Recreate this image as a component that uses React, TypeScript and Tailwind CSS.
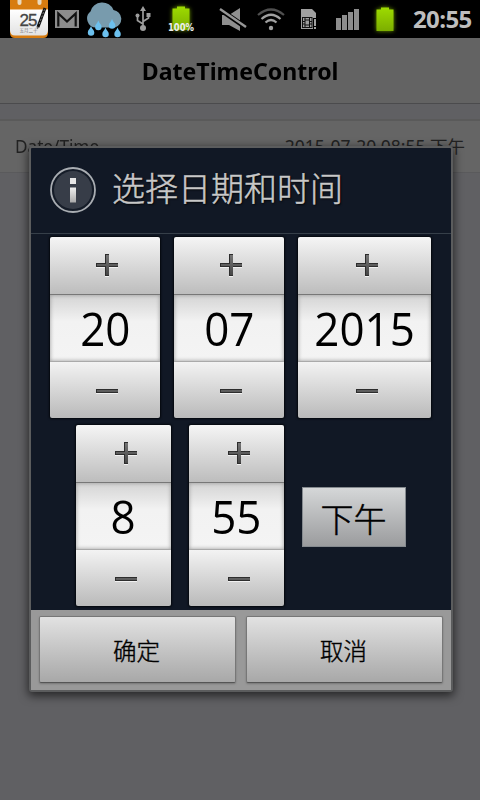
import React from "react";

const cjk = "font-['Noto_Sans','Noto_Sans_CJK_SC',sans-serif]";

function CalendarIcon() {
  return (
    <svg width="38" height="38" viewBox="0 0 38 38">
      <defs>
        <linearGradient id="page" x1="0" y1="0" x2="0" y2="1">
          <stop offset="0" stopColor="#fff" />
          <stop offset="1" stopColor="#e2e2e2" />
        </linearGradient>
      </defs>
      <path d="M0 0H38V33Q38 38 33 38H5Q0 38 0 33Z" fill="#d77c10" />
      <path d="M0 9.500H38V30Q38 35.500 33 35.500H5Q0 35.500 0 30Z" fill="url(#page)" />
      <rect x="7.500" y="-2" width="4" height="7" rx="2" fill="#ead9bd" />
      <rect x="27.500" y="-2" width="4" height="7" rx="2" fill="#ead9bd" />
      <text x="9.500" y="26" fontSize="17" fill="#444" stroke="#444" strokeWidth=".3" fontFamily="Liberation Sans" textLength="18">25</text>
      <text x="9.500" y="31.500" fontSize="4.500" fill="#777" fontFamily="Noto Sans CJK SC" textLength="18">五月二十</text>
      <path d="M28 27L35 8" stroke="#111" strokeWidth="3" />
      <path d="M29.200 24L34.500 9.500" stroke="#999" strokeWidth=".8" strokeDasharray="2 1.500" />
      <path d="M26.800 29.500L26.600 26.500L29.400 27.500Z" fill="#666" />
    </svg>
  );
}

function MailIcon() {
  return (
    <svg width="24" height="18" viewBox="0 0 24 18">
      <rect width="24" height="18" fill="#8c8c8c" />
      <path d="M3.300 16.500V3.500L12 11.500L20.700 3.500V16.500" fill="none" stroke="#111" strokeWidth="2.200" />
    </svg>
  );
}

function RainIcon() {
  const drops: number[][] = [[5, 26], [12.3, 20.5], [19.5, 27.5], [26, 19], [31.5, 27.5]];
  return (
    <svg width="38" height="38" viewBox="0 0 38 38">
      <path d="M10 27.500A9 9 0 0 1 4.500 11.500A12 11.500 0 0 1 27.500 10A9 9 0 0 1 29 27.500Z" fill="#789bad" />
      {drops.map(([x, y]) => (
        <path key={x} transform={`translate(${x} ${y})`} d="M0 0C1 3 3.300 4 3.300 6.500A3.200 3.200 0 0 1 -3.200 6.500C-3.200 4 -1 3 0 0Z" fill="#6cc0ee" />
      ))}
    </svg>
  );
}

function UsbIcon() {
  return (
    <svg width="16" height="26" viewBox="0 0 16 26" fill="none" stroke="#9d9d9d" strokeWidth="1.700">
      <path d="M8 4V21M8 18L2.500 14.500V10M8 15.500L13.500 12V8.500" />
      <path d="M8 0L11 5H5Z" fill="#9d9d9d" stroke="none" />
      <circle cx="8" cy="22" r="3" fill="#9d9d9d" stroke="none" />
      <circle cx="2.500" cy="9.500" r="2" fill="#9d9d9d" stroke="none" />
      <rect x="11.500" y="7" width="4" height="4" fill="#9d9d9d" stroke="none" />
    </svg>
  );
}

function Battery({ percent }: { percent?: string }) {
  return (
    <svg width="30" height="32" viewBox="0 0 30 32" className="overflow-visible">
      <defs>
        <linearGradient id="cell" x1="0" y1="0" x2="0" y2="1">
          <stop offset="0" stopColor="#9edb00" />
          <stop offset="1" stopColor="#7cae00" />
        </linearGradient>
      </defs>
      <path d="M6.500 5.500H11V3.500H19V5.500H23.500V27H6.500Z" fill="url(#cell)" className="drop-shadow-[0_0_2px_#6f9a00]" />
      {percent && (
        <text x="2" y="28" fontSize="10" fontWeight="700" fill="#eee" fontFamily="DejaVu Sans" textLength="26" lengthAdjust="spacingAndGlyphs">{percent}</text>
      )}
    </svg>
  );
}

function MuteIcon() {
  return (
    <svg width="28" height="24" viewBox="0 0 28 24">
      <path d="M3 7H10L21 0V23L10 17H3Z" fill="#8f8f8f" />
      <path d="M1 1.500L27 19.500" stroke="#000" strokeWidth="5" />
      <path d="M1 1L27 19" stroke="#969696" strokeWidth="2.400" />
    </svg>
  );
}

function WifiIcon() {
  return (
    <svg width="28" height="23" viewBox="0 0 28 23" fill="none" strokeWidth="2.200">
      <path d="M1 7Q14 -4 27 7" stroke="#505050" />
      <path d="M4.500 11Q14 2.500 23.500 11" stroke="#a0a0a0" />
      <path d="M8.500 14.500Q14 9.500 19.500 14.500" stroke="#a0a0a0" />
      <circle cx="14" cy="20" r="2.200" fill="#a0a0a0" stroke="none" />
    </svg>
  );
}

function SimIcon() {
  return (
    <svg width="16" height="21" viewBox="0 0 16 21">
      <path d="M0 0H11L15 4V9H12V20H0Z" fill="#a0a0a0" />
      <rect x="1.500" y="8.500" width="9.500" height="10" fill="#a0a0a0" stroke="#111" />
      <rect x="4" y="11" width="4.500" height="5" stroke="#111" fill="none" />
      <path d="M4 8V11M8.500 8V11M4 16V19M8.500 16V19M1 12.500H4M1 15H4M8.500 12.500H11M8.500 15H11" stroke="#111" />
      <path d="M14 10V17M14 18V20" stroke="#a0a0a0" strokeWidth="2" />
    </svg>
  );
}

function SignalIcon() {
  return (
    <svg width="24" height="22" viewBox="0 0 24 22" fill="#8d8d8d">
      <rect x="0" y="9" width="5" height="12" />
      <rect x="6" y="6" width="5" height="15" />
      <rect x="12" y="3" width="5" height="18" />
      <rect x="18" y="0" width="5" height="21" />
    </svg>
  );
}

function Sign({ plus }: { plus?: boolean }) {
  return (
    <svg width="24" height="24" viewBox="0 0 24 24" className="shrink-0">
      <defs>
        <linearGradient id="ink" gradientUnits="userSpaceOnUse" x1="0" y1="1" x2="0" y2="23">
          <stop offset="0" stopColor="#777" />
          <stop offset="1" stopColor="#444" />
        </linearGradient>
      </defs>
      <path d={plus ? "M10 2H14V11H23V15H14V24H10V15H1V11H10Z" : "M1 11H23V15H1Z"} fill="#f1f1f1" />
      <path d={plus ? "M10 1H14V10H23V14H14V23H10V14H1V10H10Z" : "M1 10H23V14H1Z"} fill="#2d2d2d" />
      <path d={plus ? "M11 2H14V11H23V13H14V22H11V13H2V11H11Z" : "M2 11H23V13H2Z"} fill="url(#ink)" />
    </svg>
  );
}

function Picker({ value, width }: { value: string; width: string }) {
  return (
    <div className={`flex h-[181px] flex-col overflow-hidden rounded-[2px] shadow-[0_0_2px_1px_#05080d] ${width}`}>
      <button className="flex h-[57px] shrink-0 items-center justify-center bg-linear-to-b from-[#f5f5f5] to-[#bdbdbd] pb-px pl-[4px]">
        <Sign plus />
      </button>
      <div className="flex h-[68px] shrink-0 items-center justify-center border-y border-t-[#777] border-b-[#aaa] bg-linear-to-b from-[#d4d4d4] via-[#f2f2f2] via-40% to-[#f4f4f4] shadow-[inset_0_0_4px_#999]">
        <span className="scale-x-[0.955] font-['Open_Sans','Noto_Sans',sans-serif] text-[46px] leading-[66px] text-black">{value}</span>
      </div>
      <button className="flex h-[56px] shrink-0 items-center justify-center bg-linear-to-b from-[#f3f3f3] to-[#bababa] pl-[4px] pt-[2px]">
        <Sign />
      </button>
    </div>
  );
}

function DialogButton({ label }: { label: string }) {
  return (
    <button className="h-[67px] w-[197px] rounded-[2px] border border-[#777] border-b-[#555] bg-linear-to-b from-[#e2e2e2] to-[#a8a8a8] pr-[2px] pt-[2px] font-['Noto_Sans_CJK_SC',sans-serif] text-[23.500px] font-light text-black shadow-[0_1px_2px_#777] [-webkit-text-stroke:0.4px_#000]">
      {label}
    </button>
  );
}

export default function App() {
  return (
    <div className={`relative h-[800px] w-[480px] overflow-hidden bg-[#606063] ${cjk}`}>
      <div className="flex h-[38px] items-start bg-black">
        <div className="ml-[10px]"><CalendarIcon /></div>
        <div className="ml-[7px] mt-[10px]"><MailIcon /></div>
        <div className="ml-[7px]"><RainIcon /></div>
        <div className="ml-[11px] mt-[6px]"><UsbIcon /></div>
        <div className="ml-[15px] mt-[3px]"><Battery percent="100%" /></div>
        <div className="ml-[23px] mt-[8px]"><MuteIcon /></div>
        <div className="ml-[10px] mt-[8px]"><WifiIcon /></div>
        <div className="ml-[16px] mt-[9px]"><SimIcon /></div>
        <div className="ml-[19px] mt-[9px]"><SignalIcon /></div>
        <div className="ml-[10px] mt-[4px]"><Battery /></div>
        <div className="ml-[13px] whitespace-nowrap font-['Open_Sans',sans-serif] text-[24px] font-bold leading-[38px] tracking-[-0.6px] text-[#bebebe]">20:55</div>
      </div>

      <header className="flex h-[66px] items-center justify-center border-b border-[#4b4b4d] bg-[#636363] font-['Noto_Sans',sans-serif] text-[24px] font-bold text-black">
        <span className="scale-x-[0.963]">DateTimeControl</span>
      </header>
      <div className="h-[15px]" />
      <div className="flex h-[54px] items-center justify-between border-t-2 border-b border-t-[#5a5a5a] border-b-[#5a5a5c] bg-[#656565] px-[15px] text-[17.500px] text-[#222]">
        <span className="origin-left scale-x-[0.98]">Date/Time</span>
        <span>2015-07-20 08:55 下午</span>
      </div>

      <div role="dialog" className="absolute left-[29px] top-[146px] flex h-[546px] w-[424px] flex-col rounded-[3px] border-2 border-[#5b5c5d] bg-[#111825] shadow-[0_3px_10px_1px_rgba(0,0,0,0.6)]">
        <div className="flex h-[86px] shrink-0 items-center border-b border-[#363f49] pl-[18px]">
          <svg width="48" height="48" viewBox="0 0 48 48" className="mb-[2px]">
            <defs>
              <linearGradient id="letter" x1="0" y1="0" x2="0" y2="1">
                <stop offset="0" stopColor="#eee" />
                <stop offset="1" stopColor="#aaa" />
              </linearGradient>
            </defs>
            <circle cx="24" cy="24" r="22" fill="#151c28" stroke="#a9adb2" strokeWidth="1.800" />
            <circle cx="24" cy="24" r="19" fill="#373d48" />
            <rect x="21" y="12" width="6" height="6" fill="#e6e6e6" />
            <rect x="21" y="21.500" width="6" height="15" fill="url(#letter)" />
          </svg>
          <h1 className="mb-[7px] ml-[15px] font-['Noto_Sans_CJK_SC',sans-serif] text-[33px] font-light leading-[48px] text-[#c8c8c8] [-webkit-text-stroke:0.5px_#c8c8c8] [text-shadow:1px_1px_2px_#000]">选择日期和时间</h1>
        </div>
        <div className="flex h-[376px] shrink-0 flex-col gap-[7px] pt-[3px]">
          <div className="flex gap-[14px] pl-[19px]">
            <Picker value="20" width="w-[110px]" />
            <Picker value="07" width="w-[110px]" />
            <Picker value="2015" width="w-[133px]" />
          </div>
          <div className="flex items-center gap-[18px] pl-[45px]">
            <Picker value="8" width="w-[95px]" />
            <Picker value="55" width="w-[95px]" />
            <button className="mt-[3px] h-[60px] w-[104px] border border-[#858a8f] bg-linear-to-b from-[#d5d7d8] to-[#9b9c9e] pr-px pt-[2px] font-['Noto_Sans_CJK_SC',sans-serif] text-[33px] font-light leading-none text-black [-webkit-text-stroke:0.5px_#000]">下午</button>
          </div>
        </div>
        <div className="flex flex-1 items-start gap-[10px] bg-[#999] pl-[8px] pt-[6px]">
          <DialogButton label="确定" />
          <DialogButton label="取消" />
        </div>
      </div>
    </div>
  );
}
